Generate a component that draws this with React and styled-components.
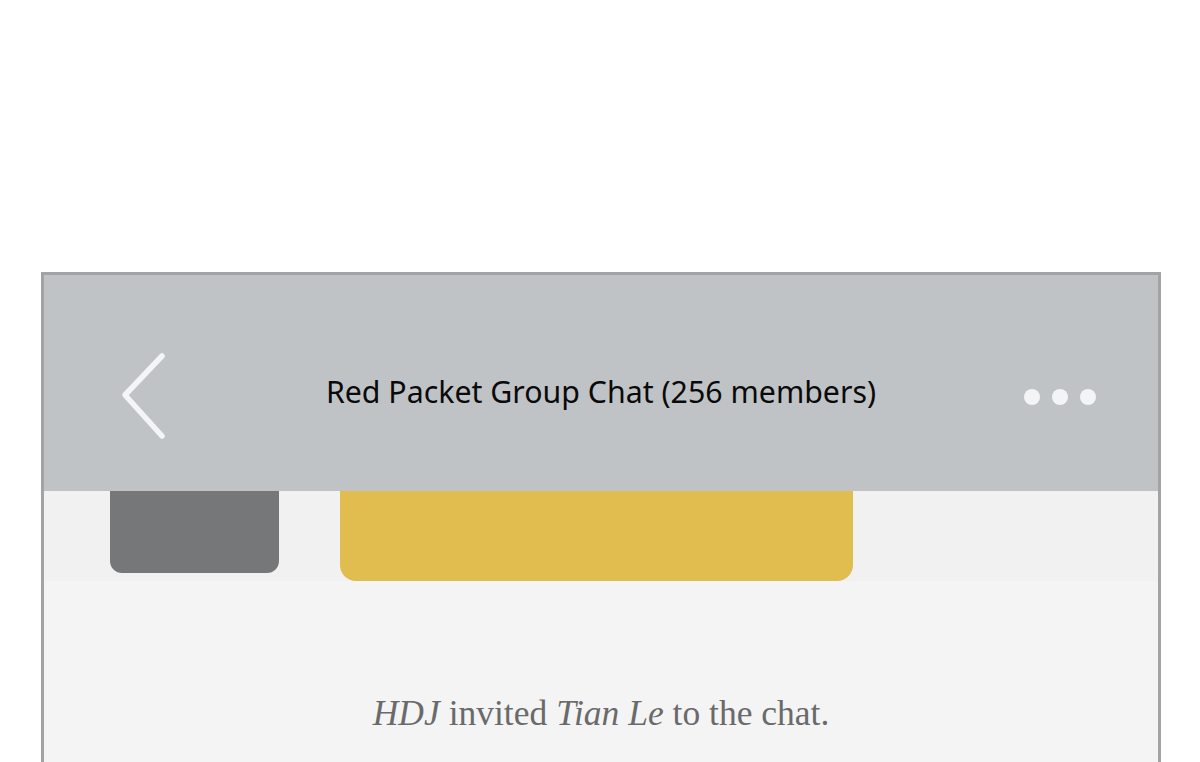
import React from "react";
import styled, { createGlobalStyle } from "styled-components";

const GlobalStyle = createGlobalStyle`
  html, body { margin: 0; padding: 0; background: #ffffff; }
  body { width: 1200px; height: 762px; overflow: hidden; }
`;

const Page = styled.div`
  display: flex;
  padding: 272px 0 0 41px;
`;

const Phone = styled.div`
  width: 1114px;
  height: 490px;
  border: 3px solid #a2a3a4;
  border-bottom: none;
  display: flex;
  flex-direction: column;
  background: #f1f1f1;
`;

const Header = styled.header`
  height: 216px;
  flex-shrink: 0;
  background: #c0c3c6;
  display: grid;
  grid-template-columns: 1fr auto 1fr;
  align-items: center;
  padding: 16px 62px 0;
  box-sizing: border-box;
`;

const BackButton = styled.div`
  justify-self: start;
  display: flex;
  margin: 12px 0 0 14px;
`;

const Title = styled.h1`
  margin: 0;
  font-family: "Noto Sans", "Open Sans", sans-serif;
  font-weight: 400;
  font-size: 30.3px;
  color: #0a0a0a;
  letter-spacing: 0;
`;

const More = styled.div`
  justify-self: end;
  display: flex;
  gap: 12px;
  margin-top: 12px;
`;

const Dot = styled.span`
  width: 16px;
  height: 16px;
  border-radius: 50%;
  background: #f2f4f5;
`;

const Body = styled.main`
  flex: 1;
  display: flex;
  flex-direction: column;
`;

const BubbleRow = styled.div`
  display: flex;
  align-items: flex-start;
  gap: 61px;
  padding-left: 66px;
  height: 90px;
  flex-shrink: 0;
`;

const Avatar = styled.div`
  width: 169px;
  height: 82px;
  background: #767778;
  border-radius: 0 0 12px 12px;
`;

const Packet = styled.div`
  width: 513px;
  height: 90px;
  background: #e0bd4e;
  border-radius: 0 0 16px 16px;
`;

const Notice = styled.div`
  flex: 1;
  background: #f4f4f4;
  display: flex;
  justify-content: center;
  padding-top: 111px;
  font-family: "Liberation Serif", "Times New Roman", serif;
  font-size: 35.5px;
  color: #6a6a6a;
  white-space: pre;
`;

const Name = styled.em`
  font-style: italic;
`;

export default function App() {
  return (
    <>
      <GlobalStyle />
      <Page>
        <Phone>
          <Header>
            <BackButton>
              <svg width="52" height="92" viewBox="0 0 52 92">
                <path
                  d="M42 5 L5 44 L42 85"
                  fill="none"
                  stroke="#f3f5f6"
                  strokeWidth="5.5"
                  strokeLinecap="round"
                  strokeLinejoin="round"
                />
              </svg>
            </BackButton>
            <Title>Red Packet Group Chat (256 members)</Title>
            <More>
              <Dot />
              <Dot />
              <Dot />
            </More>
          </Header>
          <Body>
            <BubbleRow>
              <Avatar />
              <Packet />
            </BubbleRow>
            <Notice>
              <span>
                <Name>HDJ</Name> invited <Name>Tian Le</Name> to the chat.
              </span>
            </Notice>
          </Body>
        </Phone>
      </Page>
    </>
  );
}
